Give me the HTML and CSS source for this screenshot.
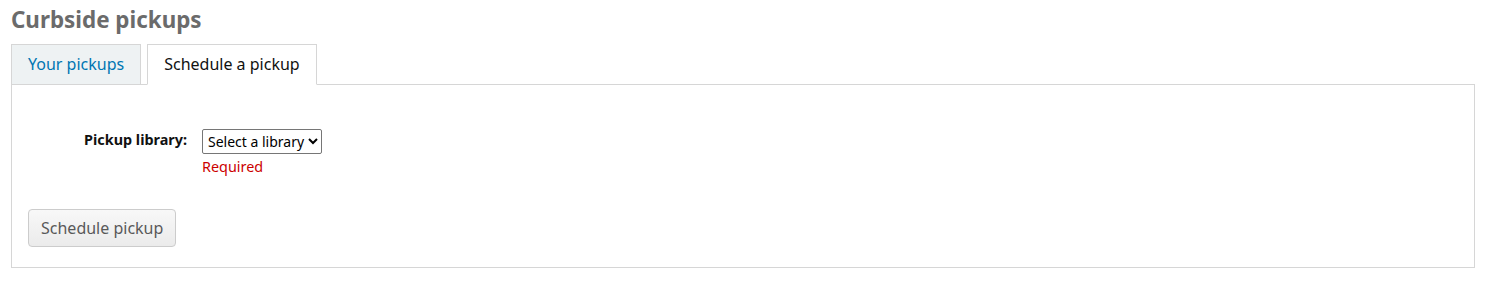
FILE: index.html
```html
<!DOCTYPE html>
<html lang="en">
<head>
<meta charset="utf-8">
<title>Curbside pickups</title>
<link rel="stylesheet" href="styles.css">
</head>
<body>
<div class="page">
  <h1 class="title">Curbside pickups</h1>
  <ul class="tabs">
    <li class="tab"><a href="#" class="tab-link">Your pickups</a></li>
    <li class="tab active"><a href="#" class="tab-link">Schedule a pickup</a></li>
  </ul>
  <div class="panel">
    <form class="form">
      <div class="row">
        <label class="row-label" for="lib">Pickup library:</label>
        <div class="row-field">
          <select id="lib" class="select">
            <option>Select a library</option>
          </select>
          <span class="required">Required</span>
        </div>
      </div>
      <button type="button" class="btn">Schedule pickup</button>
    </form>
  </div>
</div>
</body>
</html>
```
FILE: styles.css
```css
* { box-sizing: border-box; }
body {
  margin: 0;
  font-family: "Noto Sans", "Open Sans", sans-serif;
  color: #111;
  background: #fff;
}
.page {
  padding: 5px 12px 0 11px;
}
.title {
  margin: 0 0 9px 0;
  font-size: 22.4px;
  line-height: 30px;
  font-weight: 700;
  color: #6b6b6b;
}
.tabs {
  display: flex;
  gap: 6px;
  list-style: none;
  margin: 0;
  padding: 0;
  margin-bottom: -1px;
}
.tab {
  border: 1px solid #d6d6d6;
  background: #eef2f3;
}
.tab.active {
  background: #fff;
  border-bottom-color: #fff;
}
.tab-link {
  display: block;
  padding: 8px 16px;
  font-size: 16px;
  line-height: 23px;
  color: #0076b2;
  text-decoration: none;
}
.tab.active .tab-link {
  color: #111;
}
.panel {
  border: 1px solid #d6d6d6;
  padding: 44px 16px 20px 16px;
  height: 184px;
}
.form {
  display: flex;
  flex-direction: column;
  align-items: flex-start;
}
.row {
  display: flex;
  align-items: flex-start;
  gap: 15px;
}
.row-label {
  width: 159px;
  text-align: right;
  font-size: 14.4px;
  font-weight: 700;
  line-height: 20px;
  padding-top: 1px;
  color: #111;
}
.row-field {
  display: flex;
  flex-direction: column;
  align-items: flex-start;
}
.select {
  font-family: "Noto Sans", sans-serif;
  font-size: 14px;
  height: 25px;
  color: #000;
  border: 1px solid #767676;
  border-radius: 2px;
  background: #fff;
  padding: 0 0 0 1px;
}
.required {
  color: #cc0000;
  font-size: 14.4px;
  line-height: 20px;
  margin-top: 3px;
}
.btn {
  margin-top: 32px;
  font-family: "Noto Sans", sans-serif;
  font-size: 16px;
  line-height: 22px;
  padding: 7px 12px;
  white-space: nowrap;
  height: 38px;
  color: #595959;
  border: 1px solid #cccccc;
  border-radius: 4px;
  background: linear-gradient(#f8f8f8, #ebebeb);
}
```
